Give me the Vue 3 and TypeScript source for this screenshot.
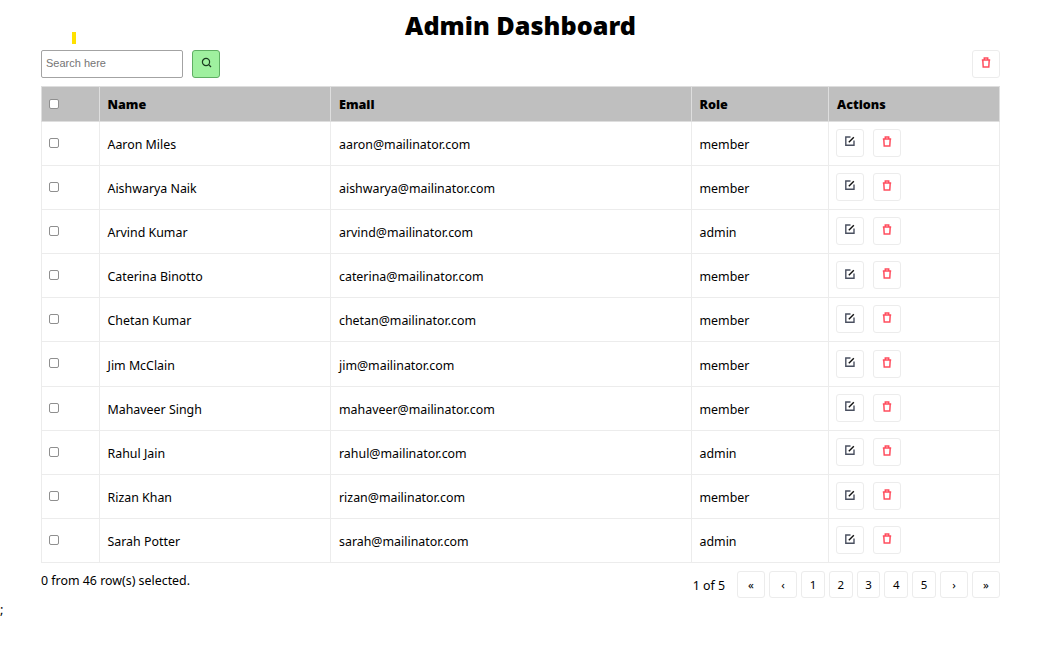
<script setup lang="ts">
interface User {
  name: string;
  email: string;
  role: string;
}

const users: User[] = [
  { name: "Aaron Miles", email: "aaron@mailinator.com", role: "member" },
  { name: "Aishwarya Naik", email: "aishwarya@mailinator.com", role: "member" },
  { name: "Arvind Kumar", email: "arvind@mailinator.com", role: "admin" },
  { name: "Caterina Binotto", email: "caterina@mailinator.com", role: "member" },
  { name: "Chetan Kumar", email: "chetan@mailinator.com", role: "member" },
  { name: "Jim McClain", email: "jim@mailinator.com", role: "member" },
  { name: "Mahaveer Singh", email: "mahaveer@mailinator.com", role: "member" },
  { name: "Rahul Jain", email: "rahul@mailinator.com", role: "admin" },
  { name: "Rizan Khan", email: "rizan@mailinator.com", role: "member" },
  { name: "Sarah Potter", email: "sarah@mailinator.com", role: "admin" },
];

const pages: string[] = ["«", "‹", "1", "2", "3", "4", "5", "›", "»"];
</script>

<template>
  <div class="page">
    <h1 class="title">Admin Dashboard</h1>
    <div class="marker"></div>
    <div class="toolbar">
      <div class="search">
        <input class="searchInput" type="text" placeholder="Search here" />
        <button class="btn searchBtn" aria-label="Search">
          <svg class="icon" width="11" height="11" viewBox="0 0 11 11" fill="none" stroke="#1a3a1f" stroke-width="1.2">
            <circle cx="5" cy="5" r="3.6" />
            <path d="M7.7 7.7 10 10" />
          </svg>
        </button>
      </div>
      <button class="btn" aria-label="Delete selected">
        <svg class="icon" width="10" height="11" viewBox="0 0 10 11" fill="none" stroke="#ff4d5e" stroke-width="1.5">
          <path d="M1.8 3.2 2.2 10h5.6l.4-6.8M.8 3h8.4M3.3 2.8V1h3.4v1.8" />
        </svg>
      </button>
    </div>

    <table class="users">
      <colgroup>
        <col class="colCheck" />
        <col class="colName" />
        <col class="colEmail" />
        <col class="colRole" />
        <col />
      </colgroup>
      <thead>
        <tr>
          <th><input class="check headCheck" type="checkbox" /></th>
          <th>Name</th>
          <th>Email</th>
          <th>Role</th>
          <th>Actions</th>
        </tr>
      </thead>
      <tbody>
        <tr v-for="user in users" :key="user.email">
          <td><input class="check" type="checkbox" /></td>
          <td>{{ user.name }}</td>
          <td>{{ user.email }}</td>
          <td>{{ user.role }}</td>
          <td>
            <div class="actions">
              <button class="btn" aria-label="Edit">
                <svg class="icon" width="10" height="10" viewBox="0 0 10 10" fill="none" stroke="#4a5060" stroke-width="1.4">
                  <path d="M5.5 1H.8v8.2H9V4.5" />
                  <path d="M3.8 6.2 8.8 1.2" stroke="#111" />
                </svg>
              </button>
              <button class="btn" aria-label="Delete">
                <svg class="icon" width="10" height="11" viewBox="0 0 10 11" fill="none" stroke="#ff4d5e" stroke-width="1.5">
                  <path d="M1.8 3.2 2.2 10h5.6l.4-6.8M.8 3h8.4M3.3 2.8V1h3.4v1.8" />
                </svg>
              </button>
            </div>
          </td>
        </tr>
      </tbody>
    </table>

    <div class="footer">
      <span class="selected">0 from 46 row(s) selected.</span>
      <div class="pager">
        <span class="pageInfo">1 of 5</span>
        <button v-for="(p, i) in pages" :key="i" class="btn pageBtn" :class="{ wide: isNaN(Number(p)) }">{{ p }}</button>
      </div>
    </div>
  </div>
  <div class="stray">;</div>
</template>

<style scoped>
.page {
  position: relative;
  padding: 0 39px 0 41px;
}

.title {
  margin: 0;
  height: 50px;
  line-height: 50px;
  font-size: 25.2px;
  font-weight: 900;
  text-align: center;
  color: #000;
}

.marker {
  position: absolute;
  left: 72px;
  top: 32px;
  width: 4px;
  height: 12px;
  background: #ffe100;
}

.toolbar {
  display: flex;
  justify-content: space-between;
  height: 28px;
  margin-bottom: 8px;
}

.search {
  display: flex;
  gap: 9px;
}

.searchInput {
  box-sizing: border-box;
  width: 142px;
  height: 28px;
  padding: 0 4px 2px;
  border: 1px solid #a3a3a3;
  border-radius: 2px;
  font-family: "Liberation Sans", Arial, sans-serif;
  font-size: 11px;
  outline: none;
}

.searchInput::placeholder {
  color: #757575;
}

.btn {
  box-sizing: border-box;
  display: flex;
  align-items: center;
  justify-content: center;
  width: 28px;
  height: 28px;
  padding: 0;
  border: 1px solid #ececec;
  border-radius: 3px;
  background: #fff;
  cursor: pointer;
}

.icon {
  margin-top: -3px;
}

.searchBtn {
  background: #9ff09f;
  border-color: #5fae63;
}

.users {
  width: 959px;
  table-layout: fixed;
  border-collapse: collapse;
  font-size: 12.4px;
  color: #000;
}

.colCheck {
  width: 58px;
}

.colName {
  width: 231px;
}

.colEmail {
  width: 361px;
}

.colRole {
  width: 137px;
}

th,
td {
  padding: 0 8px;
  border: 1px solid #ececec;
  text-align: left;
}

th {
  height: 31.5px;
  padding-top: 2px;
  background: #bfbfbf;
  border-color: #dedede;
  font-size: 12.6px;
  font-weight: 900;
}

td {
  height: 41.2px;
  padding-top: 2px;
}

th:nth-child(2),
td:nth-child(2),
th:nth-child(4),
td:nth-child(4) {
  padding-left: 7.5px;
}

td:first-child,
th:first-child {
  padding: 0 7px;
  vertical-align: top;
}

td:last-child,
th:last-child {
  padding-left: 7px;
}

th:last-child {
  padding-left: 8px;
}

.check {
  appearance: none;
  box-sizing: border-box;
  display: block;
  width: 10px;
  height: 10px;
  margin: 16px 0 0;
  border: 1px solid #8f8f8f;
  border-radius: 2px;
  background: #fff;
}

.headCheck {
  margin-top: 12px;
}

.actions {
  display: flex;
  gap: 9px;
  margin-top: -3px;
}

.footer {
  display: flex;
  justify-content: space-between;
  margin-top: 8px;
  font-size: 12.4px;
  color: #000;
}

.selected {
  line-height: 20px;
}

.pager {
  display: flex;
  align-items: center;
  gap: 4px;
}

.pageInfo {
  margin-right: 8px;
  padding-top: 2px;
  line-height: 25px;
}

.pageBtn {
  width: 23.8px;
  height: 27px;
  font-family: inherit;
  font-size: 11.5px;
  color: #000;
}

.pageBtn.wide {
  width: 28px;
}

.stray {
  font-size: 13px;
  line-height: 18px;
  margin-top: 2px;
  color: #000;
}
</style>

<style>
body {
  font-family: "Noto Sans", "DejaVu Sans", sans-serif;
  background: #fff;
}
</style>
